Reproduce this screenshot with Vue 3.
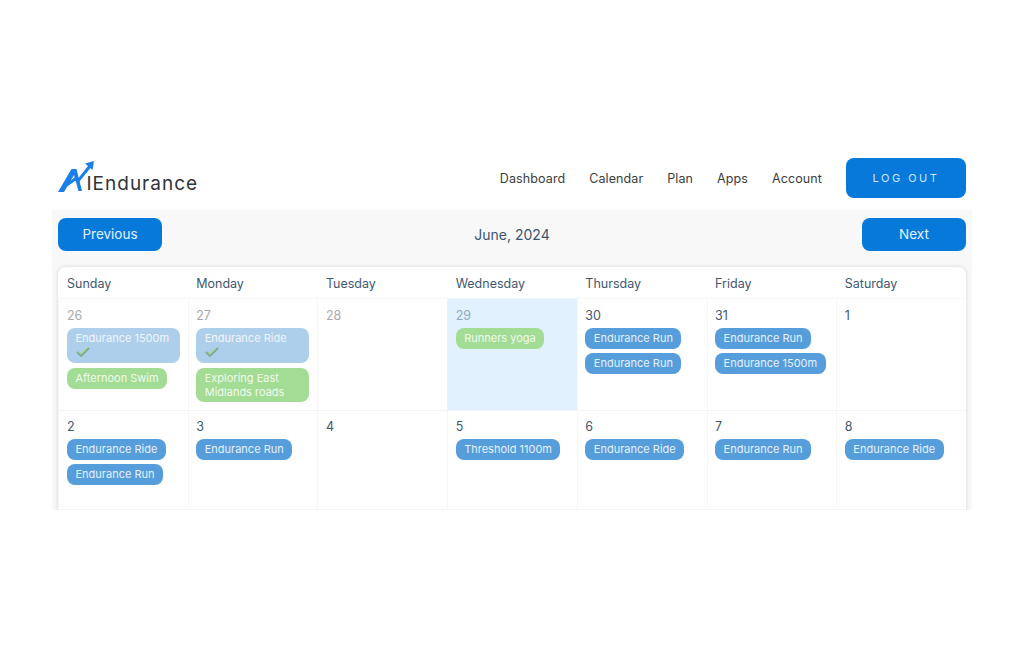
<template>
  <div class="page">
    <header class="topbar">
      <div class="logo">
        <svg class="logo-mark" width="36" height="32" viewBox="0 0 36 32">
          <path d="M0 32 L13.5 9 L18.5 9 L24 31 L20.5 31 L16 15 L6 32 Z" fill="#1a7fe8" />
          <path d="M6 27 L17 19 L20 21 L32 6" fill="none" stroke="#1a7fe8" stroke-width="3" />
          <path d="M27 3.5 L36 1 L34.5 10 Z" fill="#1a7fe8" />
        </svg>
        <span class="logo-text">IEndurance</span>
      </div>
      <nav class="nav">
        <a v-for="item in navItems" :key="item" class="nav-link">{{ item }}</a>
        <button class="logout">LOG OUT</button>
      </nav>
    </header>

    <section class="calendar-wrap">
      <div class="toolbar">
        <button class="pager">Previous</button>
        <span class="month">June, 2024</span>
        <button class="pager">Next</button>
      </div>
      <div class="calendar">
        <div class="weekdays">
          <div v-for="day in weekdays" :key="day" class="weekday">{{ day }}</div>
        </div>
        <div v-for="(week, w) in weeks" :key="w" class="week" :class="'week-' + w">
          <div
            v-for="cell in week"
            :key="cell.date"
            class="cell"
            :class="{ today: cell.today, muted: cell.muted }"
          >
            <div class="date">{{ cell.date }}</div>
            <div
              v-for="(ev, i) in cell.events"
              :key="i"
              class="event"
              :class="[ev.kind, { done: ev.done, wrapped: ev.wrapped }]"
            >
              <span>{{ ev.title }}</span>
              <svg v-if="ev.done" class="tick" width="14" height="12" viewBox="0 0 14 12">
                <path d="M1 6 L5 10 L13 2" fill="none" stroke="#7fa88a" stroke-width="1.8" />
                <path d="M2.5 5.5 L5 8 L11 2" fill="none" stroke="#9edb8f" stroke-width="1.2" />
              </svg>
            </div>
          </div>
        </div>
      </div>
    </section>
  </div>
</template>

<script setup>
const navItems = ['Dashboard', 'Calendar', 'Plan', 'Apps', 'Account']
const weekdays = ['Sunday', 'Monday', 'Tuesday', 'Wednesday', 'Thursday', 'Friday', 'Saturday']

const run = { title: 'Endurance Run', kind: 'blue' }
const ride = { title: 'Endurance Ride', kind: 'blue' }

const weeks = [
  [
    {
      date: 26,
      muted: true,
      events: [
        { title: 'Endurance 1500m', kind: 'blue', done: true },
        { title: 'Afternoon Swim', kind: 'green' },
      ],
    },
    {
      date: 27,
      muted: true,
      events: [
        { title: 'Endurance Ride', kind: 'blue', done: true },
        { title: 'Exploring East Midlands roads', kind: 'green', wrapped: true },
      ],
    },
    { date: 28, muted: true, events: [] },
    { date: 29, muted: true, today: true, events: [{ title: 'Runners yoga', kind: 'green' }] },
    { date: 30, events: [run, run] },
    { date: 31, events: [run, { title: 'Endurance 1500m', kind: 'blue' }] },
    { date: 1, events: [] },
  ],
  [
    { date: 2, events: [ride, run] },
    { date: 3, events: [run] },
    { date: 4, events: [] },
    { date: 5, events: [{ title: 'Threshold 1100m', kind: 'blue' }] },
    { date: 6, events: [ride] },
    { date: 7, events: [run] },
    { date: 8, events: [ride] },
  ],
]
</script>

<style>
body {
  background: #fff;
}
</style>

<style scoped>
.page {
  width: 1024px;
  height: 664px;
  overflow: hidden;
  padding: 158px 52px 0;
  box-sizing: border-box;
  font-family: Inter, "Liberation Sans", sans-serif;
  background: #fff;
}

.topbar {
  display: flex;
  align-items: center;
  justify-content: space-between;
  height: 40px;
  padding: 0 6px;
  margin-bottom: 12px;
}

.logo {
  display: flex;
  align-items: flex-start;
  height: 36px;
}

.logo-mark {
  display: block;
}

.logo-text {
  margin: 13px 0 0 -7.5px;
  font-size: 19px;
  line-height: 22px;
  letter-spacing: 1px;
  color: #2f3439;
}

.nav {
  display: flex;
  align-items: center;
}

.nav-link {
  margin-right: 24px;
  font-size: 12.5px;
  letter-spacing: 0.1px;
  color: #3a3d40;
}

.logout {
  width: 120px;
  height: 40px;
  border: 0;
  border-radius: 8px;
  background: #0679db;
  color: #cfe5f8;
  font-family: inherit;
  font-size: 11px;
  letter-spacing: 2.5px;
}

.calendar-wrap {
  height: 300px;
  padding: 8px 6px 0;
  box-sizing: border-box;
  background: #f8f8f8;
  overflow: hidden;
}

.toolbar {
  display: flex;
  align-items: center;
  justify-content: space-between;
  height: 33px;
  margin-bottom: 16px;
}

.pager {
  width: 104px;
  height: 33px;
  padding-bottom: 3px;
  border: 0;
  border-radius: 8px;
  background: #0679db;
  color: #e4f1fb;
  font-family: inherit;
  font-size: 13.5px;
}

.month {
  font-size: 14px;
  color: #3b556e;
}

.calendar {
  height: 250px;
  background: #fff;
  border-radius: 8px 8px 0 0;
  box-shadow: 0 0 4px rgba(0, 0, 0, 0.14);
}

.weekdays,
.week {
  display: grid;
  grid-template-columns: repeat(7, 1fr);
}

.weekdays {
  height: 32px;
  border-bottom: 1px solid #f6f6f6;
  box-sizing: border-box;
}

.weekday {
  padding: 9px 0 0 8.5px;
  font-size: 12.5px;
  line-height: 16px;
  color: #3f5870;
}

.weekday:first-child {
  padding-left: 9px;
}

.week {
  box-sizing: border-box;
  border-bottom: 1px solid #f4f4f4;
}

.week-0 {
  height: 112px;
}

.week-1 {
  height: 99px;
}

.week-1 .cell {
  padding-top: 8px;
}

.cell {
  padding: 9px 8px 0 7.5px;
  border-left: 1px solid #f6f6f6;
  box-sizing: border-box;
  min-width: 0;
}

.cell:first-child {
  padding-left: 8px;
}

.cell.today {
  background: #e1f1fe;
  border-left-color: #e1f1fe;
}

.date {
  height: 16px;
  margin-bottom: 3.5px;
  font-size: 12.5px;
  line-height: 16px;
  color: #3f5870;
}

.muted .date {
  color: #a9a9a9;
}

.today .date {
  color: #8fa9c2;
}

.event {
  width: fit-content;
  max-width: 100%;
  margin-bottom: 4px;
  padding: 3.5px 8.5px;
  border-radius: 8px;
  box-sizing: border-box;
  font-size: 11px;
  line-height: 14px;
  color: #e6f1fb;
}

.event.blue {
  background: #559ddb;
}

.event.green {
  background: #a3dc95;
  color: #effaec;
}

.event.wrapped {
  padding-bottom: 2.5px;
}

.event.blue.done {
  width: 100%;
  margin-bottom: 5px;
  background: #aecfeb;
  color: #eef5fb;
}

.tick {
  display: block;
  margin: 1px 0 1px;
}
</style>
